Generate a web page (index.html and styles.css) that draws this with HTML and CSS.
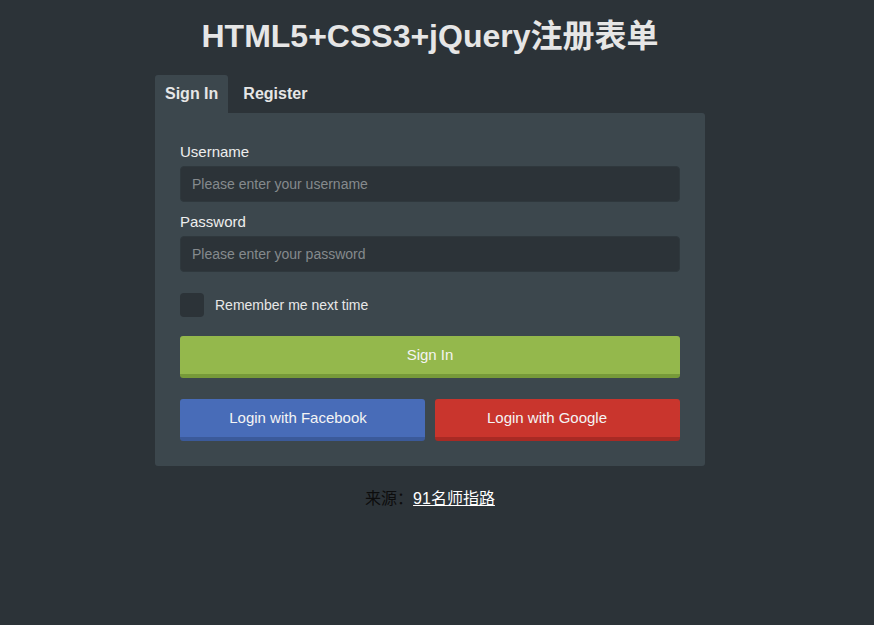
FILE: index.html
```html
<!DOCTYPE html>
<html lang="zh-CN">
<head>
  <meta charset="UTF-8" />
  <meta name="viewport" content="width=device-width, initial-scale=1.0" />
  <title>HTML5+CSS3+jQuery注册表单</title>
  <link rel="stylesheet" href="styles.css">
</head>
<body>
  <h1 class="title">HTML5+CSS3+jQuery注册表单</h1>

  <div class="box">
    <div class="tabs">
      <a class="tab active" href="#">Sign In</a>
      <a class="tab" href="#">Register</a>
    </div>

    <form class="panel" onsubmit="return false">
      <div class="field">
        <label for="username">Username</label>
        <input type="text" id="username" placeholder="Please enter your username" />
      </div>
      <div class="field">
        <label for="password">Password</label>
        <input type="password" id="password" placeholder="Please enter your password" />
      </div>

      <label class="remember">
        <span class="check"></span>
        Remember me next time
      </label>

      <button class="btn btn-green" type="submit">Sign In</button>

      <div class="social">
        <button class="btn btn-blue" type="button">Login with Facebook</button>
        <button class="btn btn-red" type="button">Login with Google</button>
      </div>
    </form>
  </div>

  <p class="source">来源：<a href="#">91名师指路</a></p>
</body>
</html>
```

FILE: styles.css
```css
body {
  margin: 0;
  padding-right: 14px;
  background: #2c3338;
  font-family: 'Liberation Sans', Arial, 'Noto Sans CJK SC', sans-serif;
  color: #e4e4e4;
}
.title {
  margin: 0 0 19px;
  padding-top: 16px;
  font-size: 32px;
  line-height: 40px;
  text-align: center;
  color: #e6e6e6;
}
.box {
  width: 550px;
  margin: 0 auto;
}
.tabs {
  display: flex;
  gap: 5px;
}
.tab {
  display: block;
  height: 38px;
  line-height: 38px;
  padding: 0 10px;
  font-size: 16px;
  font-weight: bold;
  color: #e6e6e6;
  text-decoration: none;
  border-radius: 3px 3px 0 0;
}
.tab.active {
  background: #3c474d;
}
.panel {
  background: #3c474d;
  padding: 29px 25px 25px;
  border-radius: 0 3px 3px 3px;
}
.field {
  margin-bottom: 10px;
}
.field label {
  display: block;
  font-size: 15px;
  line-height: 20px;
  margin-bottom: 4px;
  color: #eeeeee;
}
.field input {
  display: block;
  box-sizing: border-box;
  width: 100%;
  height: 36px;
  padding: 0 11px;
  border: 1px solid #2f383d;
  border-radius: 4px;
  background: #2c3338;
  color: #ddd;
  font-family: inherit;
  font-size: 14px;
  outline: none;
}
.field input::placeholder {
  color: #858a8d;
}
.remember {
  display: flex;
  align-items: center;
  gap: 11px;
  margin-top: 21px;
  font-size: 14px;
  color: #e8e8e8;
}
.check {
  width: 24px;
  height: 24px;
  border-radius: 4px;
  background: #2c3338;
}
.btn {
  display: block;
  box-sizing: border-box;
  width: 100%;
  height: 42px;
  padding: 0 0 1px;
  border: none;
  border-bottom: 4px solid;
  border-radius: 3px;
  font-family: inherit;
  font-size: 15px;
  color: #f4f4f4;
  cursor: pointer;
}
.btn-green {
  margin-top: 19px;
  background: #94b84c;
  border-bottom-color: #779a39;
}
.btn-blue {
  text-indent: -9px;
  background: #486cb8;
  border-bottom-color: #3b5a9a;
}
.btn-red {
  text-indent: -21px;
  background: #c9352d;
  border-bottom-color: #a82a24;
}
.social {
  display: flex;
  gap: 10px;
  margin-top: 21px;
}
.social .btn {
  flex: 1;
}
.source {
  margin: 19px 0 0;
  text-align: center;
  font-size: 16px;
  color: #0d0d0d;
}
.source a {
  color: #fff;
}
```
